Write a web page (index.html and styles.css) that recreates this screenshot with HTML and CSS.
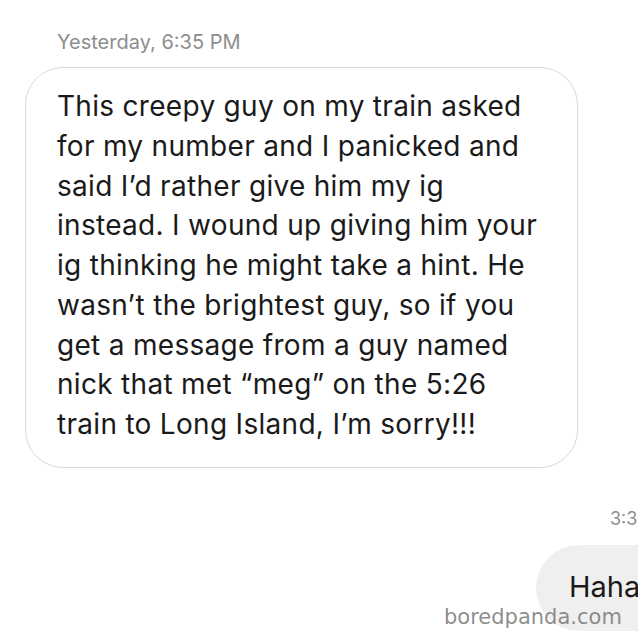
FILE: index.html
```html
<!DOCTYPE html>
<html>
<head>
<meta charset="utf-8">
<link rel="stylesheet" href="styles.css">
</head>
<body>
<div class="chat">
  <div class="stamp">Yesterday, 6:35 PM</div>
  <div class="bubble">
    <span class="line">This creepy guy on my train asked</span>
    <span class="line">for my number and I panicked and</span>
    <span class="line">said I’d rather give him my ig</span>
    <span class="line">instead. I wound up giving him your</span>
    <span class="line">ig thinking he might take a hint. He</span>
    <span class="line">wasn’t the brightest guy, so if you</span>
    <span class="line">get a message from a guy named</span>
    <span class="line">nick that met “meg” on the 5:26</span>
    <span class="line">train to Long Island, I’m sorry!!!</span>
  </div>
  <div class="stamp2">3:3</div>
  <div class="mine">Haha</div>
</div>
<div class="mark">boredpanda.com</div>
</body>
</html>
```
FILE: styles.css
```css
html, body {
  margin: 0;
  padding: 0;
  width: 638px;
  height: 638px;
  overflow: hidden;
  background: #fff;
  position: relative;
}
.chat {
  display: flex;
  flex-direction: column;
  align-items: flex-start;
  font-family: Inter, "Liberation Sans", sans-serif;
  color: #1a1a1a;
}
.stamp {
  margin: 30px 0 0 57px;
  font-size: 20px;
  line-height: 24px;
  color: #8e8e8e;
}
.bubble {
  margin: 13px 0 0 25px;
  box-sizing: border-box;
  width: 553px;
  height: 401px;
  border: 1.5px solid #d9d9d9;
  border-radius: 38px;
  padding: 19px 0 0 31px;
  display: flex;
  flex-direction: column;
  font-size: 28px;
  letter-spacing: 0.3px;
  line-height: 39.75px;
  white-space: nowrap;
}
.stamp2 {
  margin: 38.5px 0 0 610px;
  font-size: 18px;
  line-height: 24px;
  color: #8e8e8e;
  white-space: nowrap;
}
.mine {
  margin: 14.5px 0 0 536px;
  box-sizing: border-box;
  width: 220px;
  height: 86px;
  background: #efefef;
  border-radius: 43px;
  padding: 23.5px 0 0 33px;
  font-size: 29px;
  line-height: 36px;
  white-space: nowrap;
}
.mark {
  position: absolute;
  left: 444px;
  top: 605px;
  font-family: "DejaVu Sans", sans-serif;
  font-size: 21px;
  line-height: 24px;
  color: rgba(120, 120, 120, 0.85);
  white-space: nowrap;
}
```
